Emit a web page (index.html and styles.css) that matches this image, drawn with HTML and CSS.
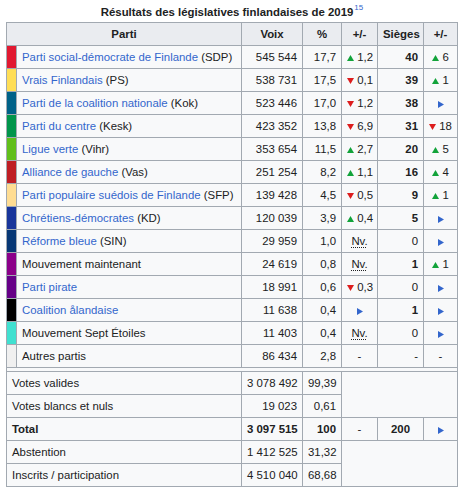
FILE: index.html
```html
<!DOCTYPE html>
<html lang="fr">
<head>
<meta charset="utf-8">
<title>Résultats des législatives finlandaises de 2019</title>
<link rel="stylesheet" href="styles.css">
</head>
<body>
<svg width="0" height="0" class="defs">
  <defs>
    <symbol id="up" viewBox="0 0 7 6"><polygon points="0,6 7,6 3.5,0" fill="#12a33a"/></symbol>
    <symbol id="down" viewBox="0 0 7 6"><polygon points="0,0 7,0 3.5,6" fill="#dd1d1d"/></symbol>
    <symbol id="steady" viewBox="0 0 6 7"><polygon points="0,0 6,3.5 0,7" fill="#3366cc"/></symbol>
  </defs>
</svg>
<table class="results">
  <caption>Résultats des législatives finlandaises de 2019<sup class="ref">15</sup></caption>
  <colgroup>
    <col class="c-sw"><col class="c-party"><col class="c-votes"><col class="c-pct"><col class="c-diff"><col class="c-seats"><col class="c-sdiff">
  </colgroup>
  <thead>
    <tr><th colspan="2">Parti</th><th>Voix</th><th>%</th><th>+/-</th><th>Sièges</th><th>+/-</th></tr>
  </thead>
  <tbody>
    <tr><td class="sw sdp"></td><td class="party"><a>Parti social-démocrate de Finlande</a> (SDP)</td><td class="num">545&nbsp;544</td><td class="num">17,7</td><td class="ctr"><svg class="tri"><use href="#up"/></svg> 1,2</td><td class="num b">40</td><td class="ctr"><svg class="tri"><use href="#up"/></svg> 6</td></tr>
    <tr><td class="sw ps"></td><td class="party"><a>Vrais Finlandais</a> (PS)</td><td class="num">538&nbsp;731</td><td class="num">17,5</td><td class="ctr"><svg class="tri"><use href="#down"/></svg> 0,1</td><td class="num b">39</td><td class="ctr"><svg class="tri"><use href="#up"/></svg> 1</td></tr>
    <tr><td class="sw kok"></td><td class="party"><a>Parti de la coalition nationale</a> (Kok)</td><td class="num">523&nbsp;446</td><td class="num">17,0</td><td class="ctr"><svg class="tri"><use href="#down"/></svg> 1,2</td><td class="num b">38</td><td class="ctr"><svg class="st"><use href="#steady"/></svg></td></tr>
    <tr><td class="sw kesk"></td><td class="party"><a>Parti du centre</a> (Kesk)</td><td class="num">423&nbsp;352</td><td class="num">13,8</td><td class="ctr"><svg class="tri"><use href="#down"/></svg> 6,9</td><td class="num b">31</td><td class="ctr"><svg class="tri"><use href="#down"/></svg> 18</td></tr>
    <tr><td class="sw vihr"></td><td class="party"><a>Ligue verte</a> (Vihr)</td><td class="num">353&nbsp;654</td><td class="num">11,5</td><td class="ctr"><svg class="tri"><use href="#up"/></svg> 2,7</td><td class="num b">20</td><td class="ctr"><svg class="tri"><use href="#up"/></svg> 5</td></tr>
    <tr><td class="sw vas"></td><td class="party"><a>Alliance de gauche</a> (Vas)</td><td class="num">251&nbsp;254</td><td class="num">8,2</td><td class="ctr"><svg class="tri"><use href="#up"/></svg> 1,1</td><td class="num b">16</td><td class="ctr"><svg class="tri"><use href="#up"/></svg> 4</td></tr>
    <tr><td class="sw sfp"></td><td class="party"><a>Parti populaire suédois de Finlande</a> (SFP)</td><td class="num">139&nbsp;428</td><td class="num">4,5</td><td class="ctr"><svg class="tri"><use href="#down"/></svg> 0,5</td><td class="num b">9</td><td class="ctr"><svg class="tri"><use href="#up"/></svg> 1</td></tr>
    <tr><td class="sw kd"></td><td class="party"><a>Chrétiens-démocrates</a> (KD)</td><td class="num">120&nbsp;039</td><td class="num">3,9</td><td class="ctr"><svg class="tri"><use href="#up"/></svg> 0,4</td><td class="num b">5</td><td class="ctr"><svg class="st"><use href="#steady"/></svg></td></tr>
    <tr><td class="sw sin"></td><td class="party"><a>Réforme bleue</a> (SIN)</td><td class="num">29&nbsp;959</td><td class="num">1,0</td><td class="ctr"><abbr>Nv.</abbr></td><td class="num">0</td><td class="ctr"><svg class="st"><use href="#steady"/></svg></td></tr>
    <tr><td class="sw liik"></td><td class="party">Mouvement maintenant</td><td class="num">24&nbsp;619</td><td class="num">0,8</td><td class="ctr"><abbr>Nv.</abbr></td><td class="num b">1</td><td class="ctr"><svg class="tri"><use href="#up"/></svg> 1</td></tr>
    <tr><td class="sw pir"></td><td class="party"><a>Parti pirate</a></td><td class="num">18&nbsp;991</td><td class="num">0,6</td><td class="ctr"><svg class="tri"><use href="#down"/></svg> 0,3</td><td class="num">0</td><td class="ctr"><svg class="st"><use href="#steady"/></svg></td></tr>
    <tr><td class="sw ala"></td><td class="party"><a>Coalition ålandaise</a></td><td class="num">11&nbsp;638</td><td class="num">0,4</td><td class="ctr"><svg class="st"><use href="#steady"/></svg></td><td class="num b">1</td><td class="ctr"><svg class="st"><use href="#steady"/></svg></td></tr>
    <tr><td class="sw sept"></td><td class="party">Mouvement Sept Étoiles</td><td class="num">11&nbsp;403</td><td class="num">0,4</td><td class="ctr"><abbr>Nv.</abbr></td><td class="num">0</td><td class="ctr"><svg class="st"><use href="#steady"/></svg></td></tr>
    <tr><td class="sw autres"></td><td class="party">Autres partis</td><td class="num">86&nbsp;434</td><td class="num">2,8</td><td class="ctr">-</td><td class="num">-</td><td class="ctr">-</td></tr>
    <tr class="spacer"><td colspan="7"></td></tr>
    <tr><td colspan="2" class="label">Votes valides</td><td class="num">3&nbsp;078&nbsp;492</td><td class="num">99,39</td><td colspan="3" rowspan="2"></td></tr>
    <tr><td colspan="2" class="label">Votes blancs et nuls</td><td class="num">19&nbsp;023</td><td class="num">0,61</td></tr>
    <tr class="total"><td colspan="2" class="label b">Total</td><td class="num b">3&nbsp;097&nbsp;515</td><td class="num b">100</td><td class="ctr">-</td><td class="ctr b">200</td><td class="ctr"><svg class="st"><use href="#steady"/></svg></td></tr>
    <tr><td colspan="2" class="label">Abstention</td><td class="num">1&nbsp;412&nbsp;525</td><td class="num">31,32</td><td colspan="3" rowspan="2"></td></tr>
    <tr><td colspan="2" class="label">Inscrits / participation</td><td class="num">4&nbsp;510&nbsp;040</td><td class="num">68,68</td></tr>
  </tbody>
</table>
</body>
</html>
```
FILE: styles.css
```css
html, body {
  margin: 0;
  padding: 0;
  background: #ffffff;
}
body {
  padding: 0 6px;
  font-family: "Liberation Sans", Arial, sans-serif;
  font-size: 11.4px;
  color: #202122;
}
.defs {
  position: absolute;
  width: 0;
  height: 0;
}
.results {
  border-collapse: collapse;
  table-layout: fixed;
  width: 451px;
  background: #f8f9fa;
  border: 1px solid #a2a9b1;
}
.results caption {
  font-weight: bold;
  padding: 5px 0 2px;
  line-height: 15px;
  white-space: nowrap;
}
.ref {
  color: #3366cc;
  font-weight: normal;
  font-size: 8px;
  line-height: 0;
  vertical-align: 6px;
  margin-left: 1px;
}
.c-sw { width: 10px; }
.c-party { width: 225px; }
.c-votes { width: 61px; }
.c-pct { width: 39px; }
.c-diff { width: 36px; }
.c-seats { width: 46px; }
.c-sdiff { width: 34px; }

.results th, .results td {
  border: 1px solid #a2a9b1;
  padding: 0 5px;
  height: 22px;
  line-height: 14px;
  white-space: nowrap;
  overflow: hidden;
}
.results th {
  background: #eaecf0;
  font-weight: bold;
  text-align: center;
}
.results td.sw { padding: 0; }
.party { padding-left: 5px; }
.party a { color: #3366cc; }
.label { padding-left: 5px; }
.num { text-align: right; }
.ctr { text-align: center; }
.b { font-weight: bold; }
abbr {
  text-decoration: underline dotted;
  text-underline-offset: 2px;
}
.tri {
  width: 7px;
  height: 6px;
  vertical-align: 0;
}
.st {
  width: 6px;
  height: 7px;
  vertical-align: -1px;
}
.results tr.spacer td {
  height: 3px;
  padding: 0;
  line-height: 0;
  font-size: 0;
}

.sdp { background: #e11931; }
.ps { background: #ffde55; }
.kok { background: #006288; }
.kesk { background: #01954b; }
.vihr { background: #61bf1a; }
.vas { background: #bf1e24; }
.sfp { background: #ffdd93; }
.kd { background: #18359b; }
.sin { background: #073775; }
.liik { background: #8b0089; }
.pir { background: #660087; }
.ala { background: #000000; }
.sept { background: #40e0d0; }
.autres { background: #f0f0f0; }
```
